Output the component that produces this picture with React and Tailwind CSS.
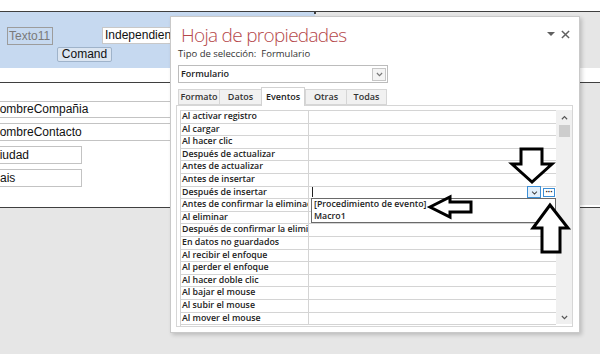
import React from 'react';

const eventos = [
  'Al activar registro',
  'Al cargar',
  'Al hacer clic',
  'Después de actualizar',
  'Antes de actualizar',
  'Antes de insertar',
  'Después de insertar',
  'Antes de confirmar la eliminación',
  'Al eliminar',
  'Después de confirmar la eliminación',
  'En datos no guardados',
  'Al recibir el enfoque',
  'Al perder el enfoque',
  'Al hacer doble clic',
  'Al bajar el mouse',
  'Al subir el mouse',
  'Al mover el mouse',
];

const tabs = ['Formato', 'Datos', 'Eventos', 'Otras', 'Todas'];
const tabWidths = ['w-[41px]', 'w-[42px]', 'w-[44px]', 'w-[41px]', 'w-[41px]'];

const Chevron = ({ up = false, className = '' }) => (
  <svg viewBox="0 0 8 5" className={className} fill="none" stroke="currentColor" strokeWidth="1.3">
    {up ? <polyline points="1,4.5 4,1.5 7,4.5" /> : <polyline points="1,0.8 4,3.8 7,0.8" />}
  </svg>
);

const PropertySheet = () => {
  return (
    <div className="absolute left-[170px] top-[16px] w-[410px] h-[317px] bg-white border border-[#c9c9c9] shadow-[2px_2px_4px_rgba(0,0,0,0.18)] pl-[7px] font-['Open_Sans',sans-serif]">
      {/* titulo */}
      <div className="flex justify-between pt-[5px] h-[31px]">
        <h1 className="pl-[3px] text-[19px] leading-[26px] font-light text-[#b5474a] tracking-[-0.7px]">Hoja de propiedades</h1>
        <div className="flex items-center gap-[6px] mr-[9px] mt-[7px] h-[10px] text-[#606060]">
          <div className="w-0 h-0 border-l-[4px] border-r-[4px] border-t-[4px] border-l-transparent border-r-transparent border-t-[#606060]" />
          <svg viewBox="0 0 10 10" className="w-[9px] h-[9px]" stroke="currentColor" strokeWidth="1.6">
            <line x1="1" y1="1" x2="9" y2="9" />
            <line x1="9" y1="1" x2="1" y2="9" />
          </svg>
        </div>
      </div>
      <div className="text-[9.5px] leading-[12px] text-[#333] font-medium whitespace-pre">Tipo de selección:  Formulario</div>

      {/* combo */}
      <div className="mt-[5px] w-[210px] h-[18px] border border-[#bcbcbc] flex items-center justify-between pl-[2px] pr-[1px]">
        <span className="text-[9px] font-semibold text-[#222]">Formulario</span>
        <div className="w-[14px] h-[13px] border border-[#c6c6c6] bg-[#f4f4f4] flex items-center justify-center text-[#777]">
          <Chevron className="w-[7px] h-[5px]" />
        </div>
      </div>

      {/* pestañas */}
      <div className="mt-[4px] flex items-end h-[18px]">
        {tabs.map((t, i) =>
          t === 'Eventos' ? (
            <div key={t} className={`${tabWidths[i]} h-[19px] -mb-px relative z-10 bg-white border border-b-0 border-[#d2d2d2] flex items-center justify-center text-[9px] font-semibold text-[#222]`}>
              {t}
            </div>
          ) : (
            <div key={t} className={`${tabWidths[i]} h-[16px] bg-[#f1f1f1] border border-[#d6d6d6] border-r-0 last:border-r flex items-center justify-center text-[9px] font-semibold text-[#333]`}>
              {t}
            </div>
          )
        )}
      </div>

      {/* panel con la cuadricula */}
      <div className="-ml-[2px] w-[397px] h-[222px] border border-[#d6d6d6] pl-[3px] pt-[4px] flex">
        <div className="w-[376px] border-l border-t border-[#d4d4d4] flex flex-col">
          {eventos.map((ev, i) => (
            <div key={ev} className="h-[12.6px] flex border-b border-[#d4d4d4] shrink-0">
              <div className="w-[128px] border-r border-[#d4d4d4] overflow-hidden whitespace-nowrap pl-[1px] text-[8.8px] leading-[11.6px] font-semibold text-[#222]">
                {ev}
              </div>
              <div className="flex-1 relative">
                {i === 6 && (
                  <div className="flex items-center h-full">
                    <div className="ml-[3px] w-px h-[10px] bg-[#222]" />
                    <div className="ml-auto w-[14px] h-[12px] -mt-px border border-[#3d8fd6] bg-[#e4f0fb] flex items-center justify-center text-[#444]">
                      <Chevron className="w-[7px] h-[4px] mt-[3px]" />
                    </div>
                    <div className="ml-[2px] mr-[1px] w-[12px] h-[9px] border border-[#3d8fd6] bg-white flex items-center justify-center text-[8px] leading-[6px] font-bold text-[#222]">
                      ···
                    </div>
                  </div>
                )}
              </div>
            </div>
          ))}
        </div>
        {/* barra de desplazamiento */}
        <div className="w-[16px] h-[214px] bg-[#f0f0f0] flex flex-col items-center text-[#555]">
          <Chevron up className="w-[7px] h-[5px] mt-[5px]" />
          <div className="mt-[5px] w-[11px] h-[12px] bg-[#cdcdcd]" />
          <div className="flex-1" />
          <Chevron className="w-[7px] h-[5px] mb-[4px]" />
        </div>
      </div>

      {/* lista desplegable */}
      <div className="absolute left-[140px] top-[181px] w-[245px] h-[25px] border border-[#6a6a6a] bg-white pl-[2px] text-[8.8px] leading-[11.5px] font-semibold text-[#222]">
        <div>[Procedimiento de evento]</div>
        <div>Macro1</div>
      </div>
    </div>
  );
};

export default function App() {
  return (
    <div className="relative w-[600px] h-[354px] overflow-hidden bg-[#e6e6e6] font-['Liberation_Sans',Arial,sans-serif]">
      <div className="h-[11px] bg-white" />
      <div className="h-px bg-[#3f3f3f]" />

      {/* encabezado del formulario */}
      <div className="flex h-[56px]">
        <div className="w-[315px] bg-[#c6d9f0] relative">
          <div className="absolute left-[7px] top-[15px] w-[46px] h-[18px] border border-[#9c9c9c] text-[12px] leading-[16px] text-[#7a7a7a] pl-[1px]">Texto11</div>
          <div className="absolute left-[102px] top-[15px] w-[90px] h-[17px] border border-[#c8c8c8] bg-white text-[12px] leading-[15px] text-[#111] pl-[2px] overflow-hidden whitespace-nowrap">Independiente</div>
          <div className="absolute left-[57px] top-[35px] w-[55px] h-[15px] border border-[#9fb3ca] rounded-[2px] bg-[#dbe5f1] text-[12px] leading-[13px] text-[#111] text-center">Comand</div>
          <div className="absolute left-[314px] -top-[1px] w-[2px] h-[3px] bg-[#3f3f3f]" />
        </div>
        <div className="flex-1" />
      </div>

      <div className="h-[14px] bg-white" />
      <div className="h-px bg-[#3f3f3f]" />

      {/* detalle */}
      <div className="flex h-[122px]">
        <div className="w-[315px] bg-white overflow-hidden">
          <div className="-ml-[12px] pt-[18px] flex flex-col gap-[5px] text-[12px] text-[#111]">
            <div className="w-[190px] h-[17px] border border-[#c3c3c3] pl-[2px] leading-[15px]">NombreCompañia</div>
            <div className="w-[190px] h-[18px] border border-[#c3c3c3] pl-[2px] leading-[16px]">NombreContacto</div>
            <div className="w-[94px] h-[18px] border border-[#c3c3c3] pl-[2px] leading-[16px]">Ciudad</div>
            <div className="w-[94px] h-[18px] border border-[#c3c3c3] pl-[3px] leading-[16px]">Pais</div>
          </div>
        </div>
        <div className="flex-1" />
      </div>
      <div className="h-[2px] bg-white" />
      <div className="h-px bg-[#3f3f3f]" />

      <PropertySheet />

      {/* flechas dibujadas encima */}
      <svg className="absolute inset-0 w-[600px] h-[354px] pointer-events-none" viewBox="0 0 600 354" fill="white" stroke="black" strokeWidth="3" strokeLinejoin="miter">
        <path d="M521,149 H542 V164 H552 L532,182 L512,164 H521 Z" />
        <path d="M550,205 L568,228 H560 V252 H542 V228 H533 Z" />
        <path d="M430,207 L450,197 V202 H471 V212 H450 V217 Z" />
      </svg>
    </div>
  );
}
